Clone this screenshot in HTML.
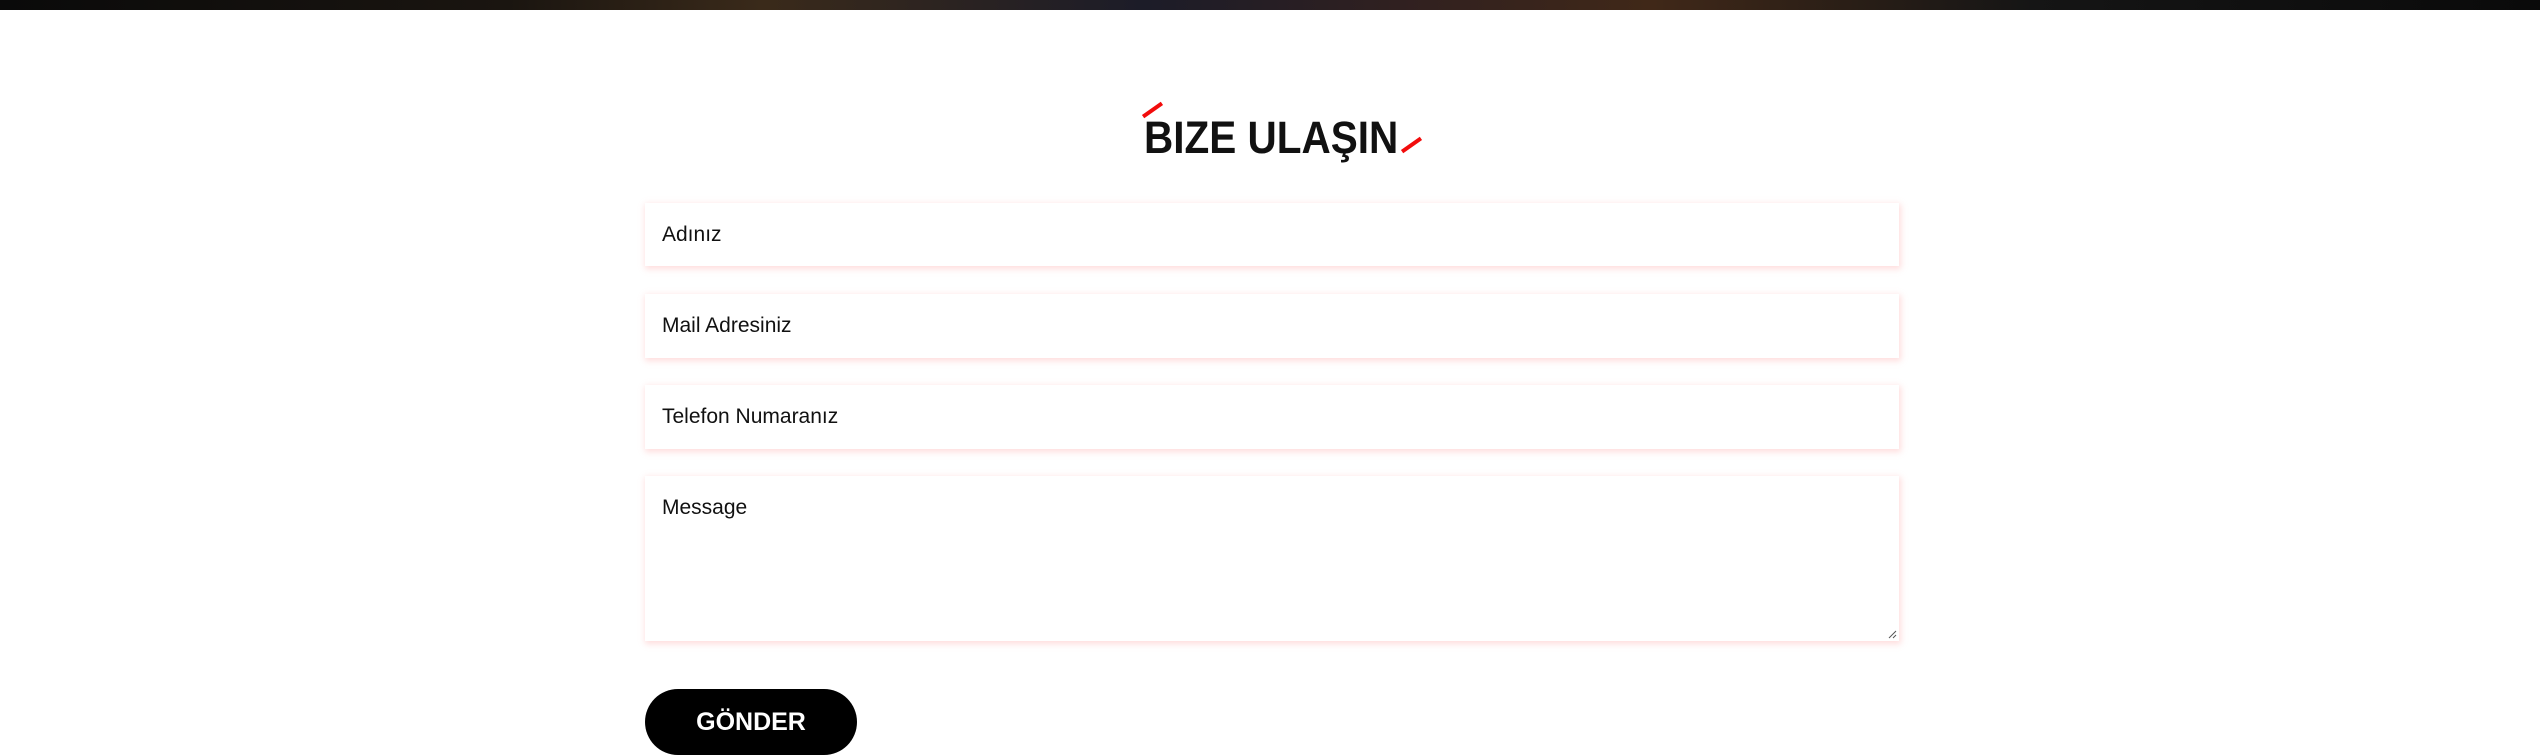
<!DOCTYPE html>
<html><head><meta charset="utf-8"><style>
html,body{margin:0;padding:0;width:2540px;height:752px;overflow:hidden;background:#fff;font-family:"Liberation Sans",sans-serif;}
.band{position:absolute;left:0;top:0;width:2540px;height:10px;background:linear-gradient(90deg,#0a0a0a 0%,#1a1510 20%,#3a2a1a 30%,#1c1c28 45%,#302020 55%,#402818 65%,#151515 80%,#0a0a0a 100%);}
h2{position:absolute;left:1144px;top:110px;margin:0;font-size:45px;font-weight:bold;color:#111;line-height:56px;white-space:nowrap;transform:scaleX(0.9);transform-origin:0 0;}
.sl{position:absolute;width:23px;height:4px;background:#f20c0c;transform:rotate(-35deg);}
.f{position:absolute;left:645px;width:1254px;background:#fff;box-shadow:1px 2px 6px 1px rgba(255,170,170,.4);box-sizing:border-box;padding-left:17px;font-size:21px;color:#111;}
.btn{position:absolute;left:645px;top:689px;width:212px;height:66px;border-radius:33px;background:#000;color:#fff;font-size:25px;font-weight:bold;text-align:center;line-height:66px;}
</style></head><body>
<div class="band"></div>
<div class="sl" style="left:1141px;top:108px"></div>
<h2>BIZE ULAŞIN</h2>
<div class="sl" style="left:1400px;top:143px"></div>
<div class="f" style="top:203px;height:63px;line-height:63px">Adınız</div>
<div class="f" style="top:294px;height:64px;line-height:64px">Mail Adresiniz</div>
<div class="f" style="top:385px;height:64px;line-height:64px">Telefon Numaranız</div>
<div class="f" style="top:476px;height:165px;padding-top:20px;line-height:24px">Message
<svg style="position:absolute;right:2px;bottom:2px" width="10" height="10"><path d="M9 2 L2 9 M9 6 L6 9" stroke="#555" stroke-width="1"/></svg></div>
<div class="btn">GÖNDER</div>
</body></html>
